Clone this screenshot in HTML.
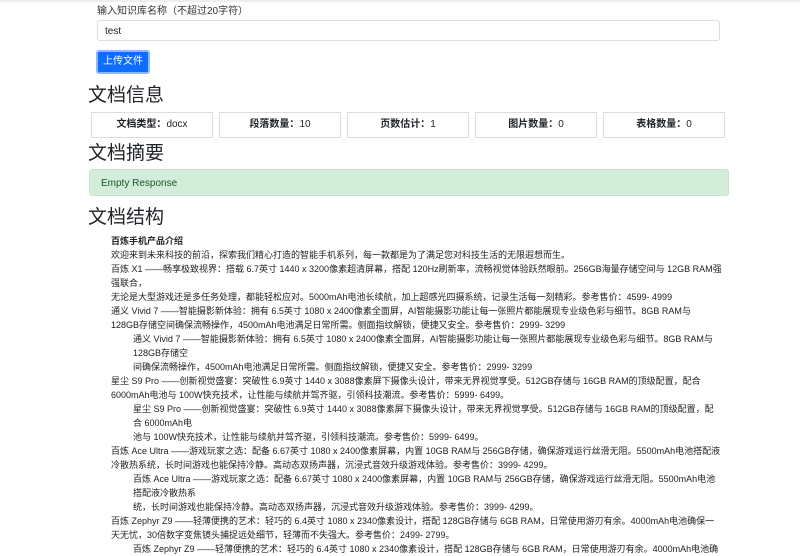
<!DOCTYPE html>
<html><head><meta charset="utf-8"><style>
body{margin:0;background:#fff;font-family:"Liberation Sans","Noto Sans CJK SC",sans-serif;color:#212529;width:800px;height:545px;overflow:hidden;position:relative}
.a{position:absolute}
.topbar{left:0;top:0;width:800px;height:2px;background:#eee}
.lbl{left:97px;top:2px;font-size:10px;color:#333}
.inp{left:97px;top:20px;height:21px;border:1px solid #ddd;border-radius:3px;font-size:10px;line-height:21px;padding-left:7px;box-sizing:border-box;width:623px}
.btn{left:96px;top:50px;width:54px;height:24px;background:#0d6efd;border:2px solid #8fb8f6;border-radius:3px;box-sizing:border-box;color:#fff;font-size:10px;line-height:20px;text-align:center}
h2{position:absolute;margin:0;font-weight:400;font-size:19px;left:88px;line-height:24px}
.card{top:112px;width:122px;height:26px;border:1px solid #ddd;box-sizing:border-box;font-size:10px;line-height:24px;text-align:center}
.alert{left:89px;top:169px;width:640px;height:27px;background:#d4eddb;border:1px solid #c3e6cb;border-radius:3px;box-sizing:border-box;font-size:10px;color:#155724;line-height:27px;padding-left:11px}
.s{left:111px;top:234px;font-size:9px;line-height:14px;white-space:nowrap;color:#222}
.s div{height:14px}
.i{padding-left:22px}
</style></head><body>
<div class="a topbar"></div>
<div class="a lbl">输入知识库名称（不超过20字符）</div>
<div class="a inp">test</div>
<div class="a btn">上传文件</div>
<h2 style="top:84px">文档信息</h2>
<div class="a card" style="left:91px"><b>文档类型：</b>docx</div>
<div class="a card" style="left:219px"><b>段落数量：</b>10</div>
<div class="a card" style="left:347px"><b>页数估计：</b>1</div>
<div class="a card" style="left:475px"><b>图片数量：</b>0</div>
<div class="a card" style="left:603px"><b>表格数量：</b>0</div>
<h2 style="top:142px">文档摘要</h2>
<div class="a alert">Empty Response</div>
<h2 style="top:206px">文档结构</h2>
<div class="a s">
<div><b>百炼手机产品介绍</b></div>
<div>欢迎来到未来科技的前沿，探索我们精心打造的智能手机系列，每一款都是为了满足您对科技生活的无限遐想而生。</div>
<div>百炼 X1 ——畅享极致视界：搭载 6.7英寸 1440 x 3200像素超清屏幕，搭配 120Hz刷新率，流畅视觉体验跃然眼前。256GB海量存储空间与 12GB RAM强</div>
<div>强联合，</div>
<div>无论是大型游戏还是多任务处理，都能轻松应对。5000mAh电池长续航，加上超感光四摄系统，记录生活每一刻精彩。参考售价：4599- 4999</div>
<div>通义 Vivid 7 ——智能摄影新体验：拥有 6.5英寸 1080 x 2400像素全面屏，AI智能摄影功能让每一张照片都能展现专业级色彩与细节。8GB RAM与</div>
<div>128GB存储空间确保流畅操作，4500mAh电池满足日常所需。侧面指纹解锁，便捷又安全。参考售价：2999- 3299</div>
<div class="i">通义 Vivid 7 ——智能摄影新体验：拥有 6.5英寸 1080 x 2400像素全面屏，AI智能摄影功能让每一张照片都能展现专业级色彩与细节。8GB RAM与</div>
<div class="i">128GB存储空</div>
<div class="i">间确保流畅操作，4500mAh电池满足日常所需。侧面指纹解锁，便捷又安全。参考售价：2999- 3299</div>
<div>星尘 S9 Pro ——创新视觉盛宴：突破性 6.9英寸 1440 x 3088像素屏下摄像头设计，带来无界视觉享受。512GB存储与 16GB RAM的顶级配置，配合</div>
<div>6000mAh电池与 100W快充技术，让性能与续航并驾齐驱，引领科技潮流。参考售价：5999- 6499。</div>
<div class="i">星尘 S9 Pro ——创新视觉盛宴：突破性 6.9英寸 1440 x 3088像素屏下摄像头设计，带来无界视觉享受。512GB存储与 16GB RAM的顶级配置，配</div>
<div class="i">合 6000mAh电</div>
<div class="i">池与 100W快充技术，让性能与续航并驾齐驱，引领科技潮流。参考售价：5999- 6499。</div>
<div>百炼 Ace Ultra ——游戏玩家之选：配备 6.67英寸 1080 x 2400像素屏幕，内置 10GB RAM与 256GB存储，确保游戏运行丝滑无阻。5500mAh电池搭配液</div>
<div>冷散热系统，长时间游戏也能保持冷静。高动态双扬声器，沉浸式音效升级游戏体验。参考售价：3999- 4299。</div>
<div class="i">百炼 Ace Ultra ——游戏玩家之选：配备 6.67英寸 1080 x 2400像素屏幕，内置 10GB RAM与 256GB存储，确保游戏运行丝滑无阻。5500mAh电池</div>
<div class="i">搭配液冷散热系</div>
<div class="i">统，长时间游戏也能保持冷静。高动态双扬声器，沉浸式音效升级游戏体验。参考售价：3999- 4299。</div>
<div>百炼 Zephyr Z9 ——轻薄便携的艺术：轻巧的 6.4英寸 1080 x 2340像素设计，搭配 128GB存储与 6GB RAM，日常使用游刃有余。4000mAh电池确保一</div>
<div>天无忧，30倍数字变焦镜头捕捉远处细节，轻薄而不失强大。参考售价：2499- 2799。</div>
<div class="i">百炼 Zephyr Z9 ——轻薄便携的艺术：轻巧的 6.4英寸 1080 x 2340像素设计，搭配 128GB存储与 6GB RAM，日常使用游刃有余。4000mAh电池确</div>
</div>
</body></html>
